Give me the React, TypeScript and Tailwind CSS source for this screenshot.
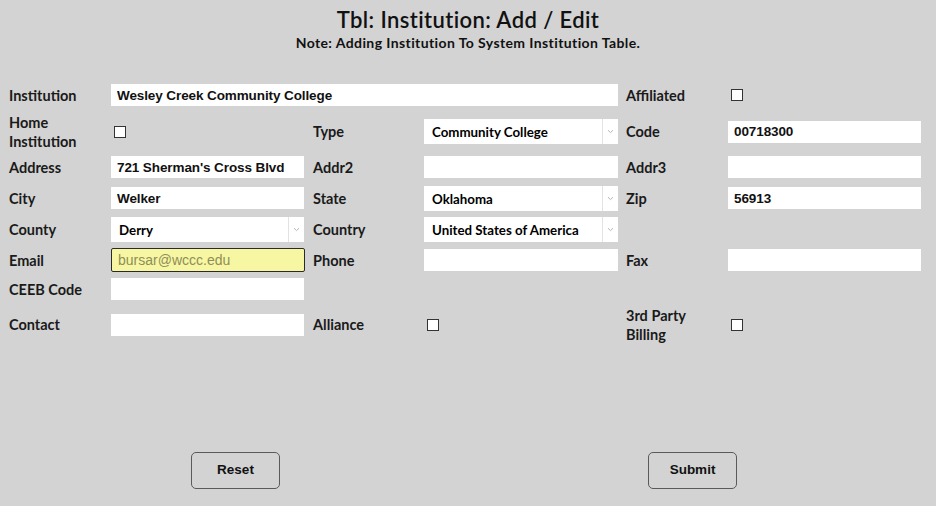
import React from 'react';

const label = "text-[14.5px] font-bold leading-[19px] text-[#1a1a1a] [font-family:'Century_Gothic',Lato,sans-serif]";
const input =
  "h-[22px] bg-white px-[6px] text-[13.5px] font-bold tracking-[-0.1px] text-[#111] outline-none [font-family:'Liberation_Sans',Arial,sans-serif]";

function TextBox({ value = '', className = '' }: { value?: string; className?: string }) {
  return <input type="text" defaultValue={value} className={`${input} ${className}`} />;
}

function Check() {
  return <span className="ml-[3px] block h-[12px] w-[12px] border border-[#333] bg-white" />;
}

function Select({ value, width }: { value: string; width: string }) {
  return (
    <div className={`relative h-[25px] bg-white ${width}`}>
      <select
        defaultValue={value}
        className="h-full w-full appearance-none bg-transparent pl-[8px] pr-[18px] pt-[2px] text-[13.3px] font-bold text-black outline-none [font-family:'Century_Gothic',Lato,sans-serif]"
      >
        <option>{value}</option>
      </select>
      <span className="pointer-events-none absolute right-[15px] top-0 h-full w-px bg-[#e2e2e2]" />
      <svg
        className="pointer-events-none absolute right-[4px] top-[10px]"
        width="7"
        height="5"
        viewBox="0 0 7 5"
        fill="none"
      >
        <path d="M1 1.2 3.5 3.6 6 1.2" stroke="#b5b5b5" strokeWidth="1" />
      </svg>
    </div>
  );
}

function Cell({ children, className = '' }: { children?: React.ReactNode; className?: string }) {
  return <div className={`flex items-center ${className}`}>{children}</div>;
}

export default function App() {
  return (
    <div className="h-[506px] w-[936px] overflow-hidden bg-[#d3d3d3]">
      <header className="pt-[6px] text-center text-[#111] [font-family:Lato,sans-serif]">
        <h1 className="text-[22px] font-semibold leading-[27px] tracking-[0.4px]">
          Tbl: Institution: Add / Edit
        </h1>
        <p className="mt-[2px] text-[14px] font-bold leading-[16px] tracking-[0.4px]">
          Note: Adding Institution To System Institution Table.
        </p>
      </header>

      <form
        data-component="InstitutionForm.Grid"
        className="mt-[29px] grid grid-cols-[102px_202px_111px_202px_102px_193px] grid-rows-[30px_43px_28px_34px_29px_32px_26px_45px] pl-[9px]"
      >
        {/* row 1 */}
        <Cell className={label}>Institution</Cell>
        <Cell className="col-span-3">
          <TextBox value="Wesley Creek Community College" className="w-[507px]" />
        </Cell>
        <Cell className={label}>Affiliated</Cell>
        <Cell>
          <Check />
        </Cell>

        {/* row 2 */}
        <Cell className={label}>
          Home
          <br />
          Institution
        </Cell>
        <Cell>
          <Check />
        </Cell>
        <Cell className={label}>Type</Cell>
        <Cell>
          <Select value="Community College" width="w-[194px]" />
        </Cell>
        <Cell className={label}>Code</Cell>
        <Cell>
          <TextBox value="00718300" className="w-[193px]" />
        </Cell>

        {/* row 3 */}
        <Cell className={label}>Address</Cell>
        <Cell>
          <TextBox value="721 Sherman's Cross Blvd" className="w-[193px]" />
        </Cell>
        <Cell className={label}>Addr2</Cell>
        <Cell>
          <TextBox className="w-[194px]" />
        </Cell>
        <Cell className={label}>Addr3</Cell>
        <Cell>
          <TextBox className="w-[193px]" />
        </Cell>

        {/* row 4 */}
        <Cell className={label}>City</Cell>
        <Cell>
          <TextBox value="Welker" className="w-[193px]" />
        </Cell>
        <Cell className={label}>State</Cell>
        <Cell>
          <Select value="Oklahoma" width="w-[194px]" />
        </Cell>
        <Cell className={label}>Zip</Cell>
        <Cell>
          <TextBox value="56913" className="w-[193px]" />
        </Cell>

        {/* row 5 */}
        <Cell className={label}>County</Cell>
        <Cell>
          <Select value="Derry" width="w-[193px]" />
        </Cell>
        <Cell className={label}>Country</Cell>
        <Cell>
          <Select value="United States of America" width="w-[194px]" />
        </Cell>
        <Cell />
        <Cell />

        {/* row 6 */}
        <Cell className={label}>Email</Cell>
        <Cell>
          <input
            type="text"
            defaultValue="bursar@wccc.edu"
            className="h-[24px] w-[194px] rounded-[2px] border border-[#2a2a2a] bg-[#f7f7a3] px-[6px] text-[14px] text-[#8e8e58] outline-none [font-family:'Liberation_Sans',Arial,sans-serif]"
          />
        </Cell>
        <Cell className={label}>Phone</Cell>
        <Cell>
          <TextBox className="w-[194px]" />
        </Cell>
        <Cell className={label}>Fax</Cell>
        <Cell>
          <TextBox className="w-[193px]" />
        </Cell>

        {/* row 7 */}
        <Cell className={label}>CEEB Code</Cell>
        <Cell>
          <TextBox className="w-[193px]" />
        </Cell>
        <Cell />
        <Cell />
        <Cell />
        <Cell />

        {/* row 8 */}
        <Cell className={label}>Contact</Cell>
        <Cell>
          <TextBox className="w-[193px]" />
        </Cell>
        <Cell className={label}>Alliance</Cell>
        <Cell>
          <Check />
        </Cell>
        <Cell className={label}>
          3rd Party
          <br />
          Billing
        </Cell>
        <Cell>
          <Check />
        </Cell>
      </form>

      <div className="mt-[105px] flex gap-[368px] pl-[191px]">
        <button
          type="button"
          className="h-[37px] w-[89px] rounded-[5px] border border-[#5a5a5a] text-[13.5px] font-bold text-[#111] [font-family:'Liberation_Sans',Arial,sans-serif]"
        >
          Reset
        </button>
        <button
          type="button"
          className="h-[37px] w-[89px] rounded-[5px] border border-[#5a5a5a] text-[13.5px] font-bold text-[#111] [font-family:'Liberation_Sans',Arial,sans-serif]"
        >
          Submit
        </button>
      </div>
    </div>
  );
}
